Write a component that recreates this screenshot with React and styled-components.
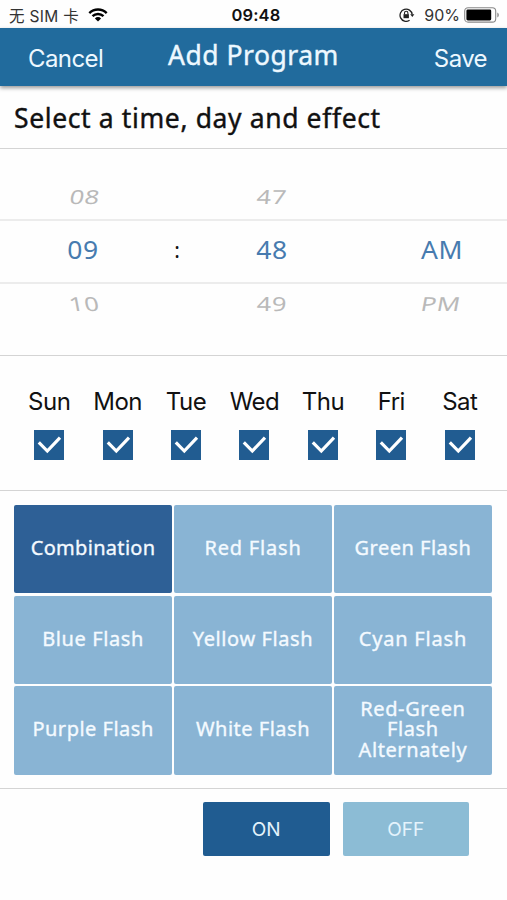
import React, { useState } from 'react';
import styled, { createGlobalStyle } from 'styled-components';

const weekDays = ['Sun', 'Mon', 'Tue', 'Wed', 'Thu', 'Fri', 'Sat'];

const effects = [
  { name: 'Combination', spacing: 0.3 },
  { name: 'Red Flash', spacing: 0.8 },
  { name: 'Green Flash', spacing: 0.5 },
  { name: 'Blue Flash', spacing: 0.6 },
  { name: 'Yellow Flash', spacing: 0.6 },
  { name: 'Cyan Flash', spacing: 0.8 },
  { name: 'Purple Flash', spacing: 0.5 },
  { name: 'White Flash', spacing: 0.5 },
  { name: 'Red-Green Flash Alternately', spacing: 0.6 },
];

const wheelRows = [
  { hour: '08', minute: '47', period: '' },
  { hour: '09', minute: '48', period: 'AM', active: true },
  { hour: '10', minute: '49', period: 'PM' },
];

export default function App() {
  const [days, setDays] = useState(weekDays);
  const [effect, setEffect] = useState('Combination');
  const [power, setPower] = useState('ON');

  const toggleDay = (day) => {
    setDays(days.includes(day) ? days.filter((d) => d !== day) : [...days, day]);
  };

  return (
    <Screen>
      <GlobalStyle />
      <StatusBar>
        <Carrier>
          <span>无 SIM 卡</span>
          <WifiIcon />
        </Carrier>
        <Clock>09:48</Clock>
        <BatteryGroup>
          <LockIcon />
          <Percent>90%</Percent>
          <BatteryIcon />
        </BatteryGroup>
      </StatusBar>

      <NavBar>
        <NavAction>Cancel</NavAction>
        <NavTitle>Add Program</NavTitle>
        <NavAction $right>Save</NavAction>
      </NavBar>

      <Heading>Select a time, day and effect</Heading>

      <Wheel>
        {wheelRows.map((row, index) => (
          <WheelRow key={row.hour} $active={row.active}>
            <WheelValue $active={row.active} $tilt={index === 0 ? -8 : 8} $shift={index === 0 ? 2 : 1}>
              {row.hour}
            </WheelValue>
            <Colon>{row.active ? ':' : ''}</Colon>
            <WheelValue $active={row.active} $tilt={index === 0 ? -4 : -1}>{row.minute}</WheelValue>
            <span />
            <WheelValue $active={row.active} $tilt={-8} $shift={-1}>{row.period}</WheelValue>
          </WheelRow>
        ))}
      </Wheel>

      <Days>
        {weekDays.map((day) => (
          <Day key={day} onClick={() => toggleDay(day)}>
            <DayName>{day}</DayName>
            <Checkbox $checked={days.includes(day)}>
              <CheckIcon />
            </Checkbox>
          </Day>
        ))}
      </Days>

      <EffectSection>
        <Effects>
          {effects.map(({ name, spacing }) => (
            <Effect
              key={name}
              $active={effect === name}
              $spacing={spacing}
              onClick={() => setEffect(name)}
            >
              {name}
            </Effect>
          ))}
        </Effects>
      </EffectSection>

      <Footer>
        <PowerButton $active={power === 'ON'} onClick={() => setPower('ON')}>ON</PowerButton>
        <PowerButton $active={power === 'OFF'} onClick={() => setPower('OFF')}>OFF</PowerButton>
      </Footer>
    </Screen>
  );
}

function WifiIcon() {
  return (
    <svg width="20" height="14" viewBox="0 0 20 14" fill="none" stroke="#000" strokeWidth="2.4">
      <path d="M1.3 5.1a12.4 12.4 0 0 1 17.4 0" />
      <path d="M4.5 8.2a7.8 7.8 0 0 1 11 0" />
      <path d="M10 13.4L6.9 10.4a4.4 4.4 0 0 1 6.2 0z" fill="#000" stroke="none" />
    </svg>
  );
}

function LockIcon() {
  return (
    <svg width="16" height="14" viewBox="0 0 16 14" fill="none" stroke="#222" strokeWidth="1.3">
      <path d="M10.6 12.3A6.1 6.1 0 1 1 13.2 6.5" />
      <path d="M11.2 6.2h4.2L13.3 9z" fill="#222" stroke="none" />
      <rect x="4.5" y="6.2" width="5.4" height="4" fill="#222" stroke="none" />
      <path d="M5.5 6.4V5a1.7 1.7 0 0 1 3.4 0v1.4" strokeWidth="1.1" />
    </svg>
  );
}

function BatteryIcon() {
  return (
    <svg width="36" height="16" viewBox="0 0 36 16">
      <rect x="0.7" y="0.7" width="31" height="14.4" rx="3.4" fill="none" stroke="#888" strokeWidth="1.1" />
      <rect x="2.4" y="2.4" width="24.8" height="11" rx="1.4" fill="#000" />
      <path d="M33.3 5.4c2 .8 2 4.2 0 5z" fill="#888" />
    </svg>
  );
}

function CheckIcon() {
  return (
    <svg width="30" height="30" viewBox="0 0 30 30" fill="none" stroke="#fff" strokeWidth="3.2">
      <path d="M4.8 12.4l8.5 8.6L26 7.6" />
    </svg>
  );
}

const GlobalStyle = createGlobalStyle`
  body {
    margin: 0;
    background-color: #fefefe;
  }

  * {
    box-sizing: border-box;
  }

  button {
    border: 0;
    padding: 0;
    cursor: pointer;
  }
`;

const Screen = styled.div`
  display: flex;
  flex-direction: column;
  width: 507px;
  height: 900px;
  overflow: hidden;
  background-color: #fefefe;
  font-family: 'Inter', 'Noto Sans CJK SC', sans-serif;
  color: #111;
`;

const StatusBar = styled.div`
  display: grid;
  grid-template-columns: 1fr auto 1fr;
  align-items: center;
  height: 28px;
  padding: 1px 7px 0 9px;
  font-size: 16px;
`;

const Carrier = styled.div`
  display: flex;
  align-items: center;
  gap: 9px;
  color: #333;
  font-size: 15.5px;
  letter-spacing: 0.3px;
`;

const Clock = styled.div`
  padding-left: 3px;
  font-size: 16.5px;
  font-weight: 600;
  letter-spacing: 0.1px;
`;

const BatteryGroup = styled.div`
  display: flex;
  align-items: center;
  justify-content: flex-end;
`;

const Percent = styled.span`
  margin: 0 4px 0 9px;
  color: #333;
`;

const NavBar = styled.div`
  display: grid;
  grid-template-columns: 1fr auto 1fr;
  align-items: center;
  height: 58px;
  flex-shrink: 0;
  padding: 0 20px;
  background-color: #216b9d;
  box-shadow: 0 2px 4px rgba(0, 0, 0, 0.4);
  color: #edf8ff;
`;

const NavAction = styled.div`
  padding: ${({ $right }) => ($right ? '3px 0 0' : '3px 0 0 8px')};
  text-align: ${({ $right }) => ($right ? 'right' : 'left')};
  font-size: 24px;
  letter-spacing: -0.6px;
`;

const NavTitle = styled.div`
  padding-bottom: 4px;
  font-family: 'Noto Sans', sans-serif;
  font-size: 26.5px;
  letter-spacing: 0.5px;
  -webkit-text-stroke: 0.4px currentColor;
`;

const Heading = styled.div`
  display: flex;
  align-items: center;
  height: 63px;
  flex-shrink: 0;
  padding: 2px 14px 0;
  border-bottom: 1px solid #d4d4d4;
  font-family: 'Noto Sans', sans-serif;
  font-size: 26.5px;
  letter-spacing: 0.62px;
  white-space: nowrap;
  -webkit-text-stroke: 0.4px currentColor;
`;

const Wheel = styled.div`
  display: flex;
  flex-direction: column;
  height: 207px;
  flex-shrink: 0;
  padding-top: 28px;
  border-bottom: 1px solid #d4d4d4;
  font-family: 'Noto Sans', sans-serif;
`;

const WheelRow = styled.div`
  display: grid;
  grid-template-columns: 166px 22px 168px 56px 60px;
  align-items: center;
  height: ${({ $active }) => ($active ? '65px' : '42px')};
  padding-bottom: 4px;
  border: solid #ececec;
  border-width: ${({ $active }) => ($active ? '2px 0' : '0')};
`;

const WheelValue = styled.span`
  text-align: center;
  font-size: 24.5px;
  letter-spacing: 0.6px;
  color: ${({ $active }) => ($active ? '#477baf' : '#b9b9b9')};
  transform: ${({ $active, $tilt, $shift = 0 }) => (
    $active ? 'scaleX(1.08)' : `translateX(${$shift}px) scale(1.04, 0.79) skewX(${$tilt}deg)`
  )};
`;

const Colon = styled.span`
  text-align: center;
  font-size: 21px;
`;

const Days = styled.div`
  display: flex;
  height: 135px;
  flex-shrink: 0;
  padding: 31px 13px 0 15px;
  border-bottom: 1px solid #d4d4d4;
`;

const Day = styled.div`
  display: flex;
  flex: 1;
  flex-direction: column;
  align-items: center;
`;

const DayName = styled.div`
  height: 43px;
  font-size: 24px;
  line-height: 30px;
  letter-spacing: -0.5px;
`;

const Checkbox = styled.div`
  width: 30px;
  height: 30px;
  background-color: #215c91;

  svg {
    display: block;
    visibility: ${({ $checked }) => ($checked ? 'visible' : 'hidden')};
  }
`;

const EffectSection = styled.div`
  height: 298px;
  flex-shrink: 0;
  padding: 14px 15px 0 14px;
  border-bottom: 1px solid #d4d4d4;
`;

const Effects = styled.div`
  display: grid;
  grid-template-columns: repeat(3, minmax(0, 1fr));
  grid-template-rows: repeat(3, 1fr);
  column-gap: 1.7px;
  row-gap: 2.3px;
  height: 269.5px;
`;

const Effect = styled.button`
  padding: 0 16px 2px;
  border-radius: 2px;
  background-color: ${({ $active }) => ($active ? '#2e6096' : '#89b4d4')};
  color: #f4faff;
  font-family: 'Noto Sans', sans-serif;
  font-size: 20px;
  line-height: 20.4px;
  letter-spacing: ${({ $spacing }) => $spacing}px;
  -webkit-text-stroke: 0.35px currentColor;
`;

const Footer = styled.div`
  display: flex;
  gap: 13px;
  justify-content: flex-end;
  padding: 13px 38px 0 0;
`;

const PowerButton = styled.button`
  width: 126.5px;
  height: 54px;
  border-radius: 2px;
  background-color: ${({ $active }) => ($active ? '#205c91' : '#8cbcd5')};
  color: #e4f3fc;
  font-family: 'Inter', sans-serif;
  font-size: 19px;
`;
